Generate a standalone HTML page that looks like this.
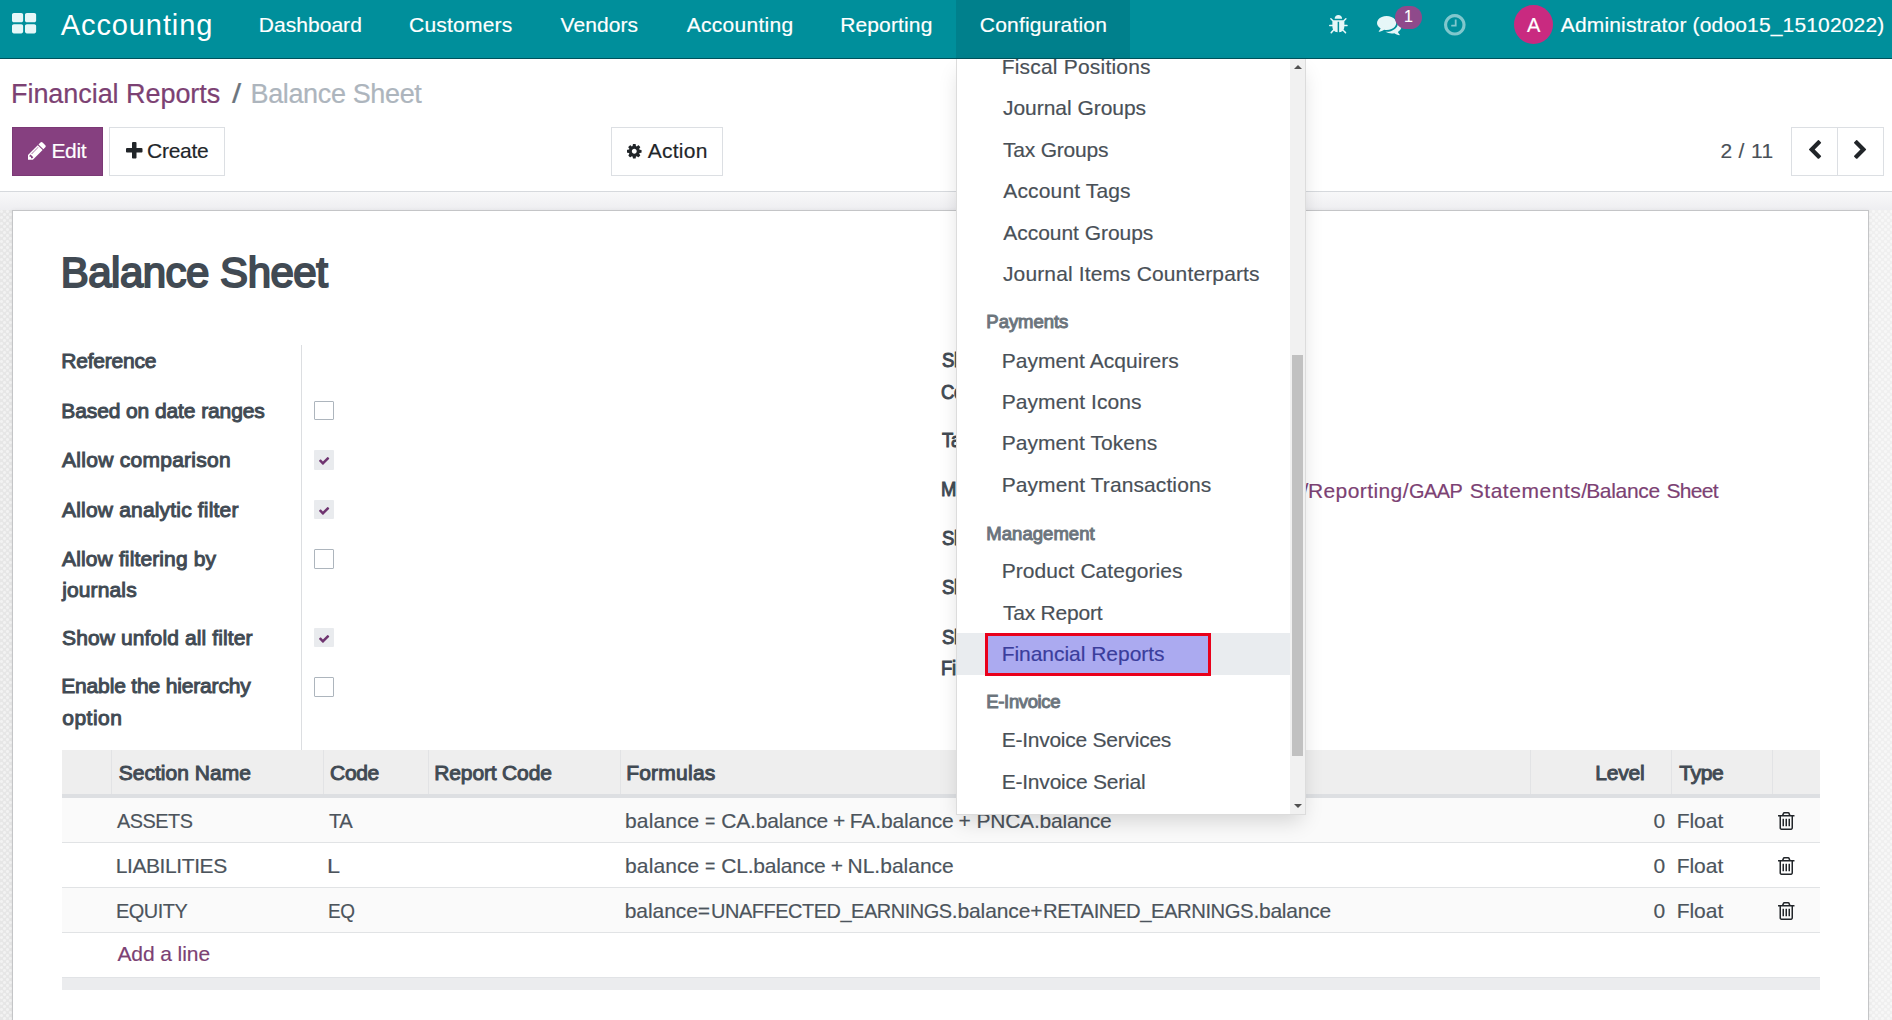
<!DOCTYPE html><html lang="en"><head><meta charset="utf-8"><title>Balance Sheet - Odoo</title><style>
*{box-sizing:border-box;margin:0;padding:0}
html,body{width:1892px;height:1020px;overflow:hidden;background:#fff}
body{position:relative;font-family:"Liberation Sans", sans-serif;font-size:21px;color:#495057;-webkit-font-smoothing:antialiased}
div,span,a,label,h1,svg,nav,header,main,section,ul,li{position:absolute;display:block}
a{text-decoration:none}
.t{white-space:nowrap;font-weight:400;font-style:normal}
.ic{overflow:visible}
.w{left:0;top:0;width:1892px;height:0}
#nav{left:0;top:0;width:1892px;height:59px;background:#008f9b;border-bottom:1px solid #00525c}
#cp{left:0;top:59px;width:1892px;height:133px;background:#fff;border-bottom:1px solid #d6d9dd}
#content{left:0;top:192px;width:1892px;height:828px;background-color:#e6e6e6;
 background-image:radial-gradient(circle at 1.5px 1.5px,#f2f2f2 1.0px,rgba(242,242,242,0) 2.2px),radial-gradient(circle at 1.5px 1.5px,#f2f2f2 1.0px,rgba(242,242,242,0) 2.2px);
 background-size:6px 6px;background-position:0 0,3px 3px}
#band{left:0;top:0;width:1892px;height:18px;background:linear-gradient(#f8f8f9,#eeeef1)}
#sheet{left:12px;top:18px;width:1857px;height:830px;background:#fff;border:1px solid #c4c5c7;box-shadow:0 0 4px rgba(0,0,0,.05)}
.btn{border:1px solid #dcdfe3;background:#fff}
.cb{border:1px solid #adb5bd;background:#fff;border-radius:1px}
.cbc{background:#e9ebee;border-radius:1px}
#dd{left:956px;top:59px;width:350px;height:756px;background:#fff;border:1px solid #dcdcdc;border-top:0;box-shadow:0 10px 20px -4px rgba(0,0,0,.155);overflow:hidden}
</style></head><body>
<header class="w"><div id="cp"></div>
<a class="t" style="left:11.00px;top:77.50px;font-size:27px;line-height:32px;letter-spacing:-0.054px;color:#7c4173;-webkit-text-stroke:0.22px #7c4173;">Financial Reports</a>
<span class="t" style="left:231.61px;top:77.50px;font-size:27px;line-height:32px;letter-spacing:0.000px;color:#6c757d;-webkit-text-stroke:0.22px #6c757d;transform:scaleX(1.2221);transform-origin:0 0;">/</span>
<span class="t" style="left:250.50px;top:77.50px;font-size:27px;line-height:32px;letter-spacing:-0.361px;color:#adb5bd;-webkit-text-stroke:0.22px #adb5bd;">Balance Sheet</span>
<div style="left:12px;top:127px;width:91px;height:49px;background:#864080;border:1px solid #7b3975;"></div>
<svg class="ic" style="left:28.00px;top:141.80px;width:17.75px;height:17.75px;" viewBox="0 -1387 1515 1515"><path fill="#fff" transform="scale(1,-1)" d="M363 0l91 91l-235 235l-91 -91v-107h128v-128h107zM886 928q0 22 -22 22q-10 0 -17 -7l-542 -542q-7 -7 -7 -17q0 -22 22 -22q10 0 17 7l542 542q7 7 7 17zM832 1120l416 -416l-832 -832h-416v416zM1515 1024q0 -53 -37 -90l-166 -166l-416 416l166 165q36 38 90 38
q53 0 91 -38l235 -234q37 -39 37 -91z"/></svg>
<span class="t" style="left:51.44px;top:138.00px;font-size:21px;line-height:25px;letter-spacing:-0.329px;color:#ffffff;-webkit-text-stroke:0.17px #ffffff;">Edit</span>
<div class="btn" style="left:109px;top:127px;width:116px;height:49px;"></div>
<svg class="ic" style="left:125.80px;top:141.60px;width:16.50px;height:16.50px;" viewBox="0 -1408 1408 1408"><path fill="#212529" transform="scale(1,-1)" d="M1408 800v-192q0 -40 -28 -68t-68 -28h-416v-416q0 -40 -28 -68t-68 -28h-192q-40 0 -68 28t-28 68v416h-416q-40 0 -68 28t-28 68v192q0 40 28 68t68 28h416v416q0 40 28 68t68 28h192q40 0 68 -28t28 -68v-416h416q40 0 68 -28t28 -68z"/></svg>
<span class="t" style="left:147.10px;top:138.00px;font-size:21px;line-height:25px;letter-spacing:-0.273px;color:#212529;-webkit-text-stroke:0.17px #212529;">Create</span>
<div class="btn" style="left:611px;top:127px;width:112px;height:49px;"></div>
<svg class="ic" style="left:627.20px;top:143.60px;width:14.57px;height:14.57px;" viewBox="0 -1408 1536 1536"><path fill="#212529" transform="scale(1,-1)" d="M1024 640q0 106 -75 181t-181 75t-181 -75t-75 -181t75 -181t181 -75t181 75t75 181zM1536 749v-222q0 -12 -8 -23t-20 -13l-185 -28q-19 -54 -39 -91q35 -50 107 -138q10 -12 10 -25t-9 -23q-27 -37 -99 -108t-94 -71q-12 0 -26 9l-138 108q-44 -23 -91 -38
q-16 -136 -29 -186q-7 -28 -36 -28h-222q-14 0 -24.5 8.5t-11.5 21.5l-28 184q-49 16 -90 37l-141 -107q-10 -9 -25 -9q-14 0 -25 11q-126 114 -165 168q-7 10 -7 23q0 12 8 23q15 21 51 66.5t54 70.5q-27 50 -41 99l-183 27q-13 2 -21 12.5t-8 23.5v222q0 12 8 23t19 13
l186 28q14 46 39 92q-40 57 -107 138q-10 12 -10 24q0 10 9 23q26 36 98.5 107.5t94.5 71.5q13 0 26 -10l138 -107q44 23 91 38q16 136 29 186q7 28 36 28h222q14 0 24.5 -8.5t11.5 -21.5l28 -184q49 -16 90 -37l142 107q9 9 24 9q13 0 25 -10q129 -119 165 -170q7 -8 7 -22
q0 -12 -8 -23q-15 -21 -51 -66.5t-54 -70.5q26 -50 41 -98l183 -28q13 -2 21 -12.5t8 -23.5z"/></svg>
<span class="t" style="left:647.69px;top:138.00px;font-size:21px;line-height:25px;letter-spacing:0.269px;color:#212529;-webkit-text-stroke:0.17px #212529;">Action</span>
<span class="t" style="left:1720.40px;top:138.00px;font-size:21px;line-height:25px;letter-spacing:0.337px;color:#495057;-webkit-text-stroke:0.17px #495057;">2 / 11</span>
<div class="btn" style="left:1791px;top:127px;width:47px;height:49px;"></div>
<div class="btn" style="left:1837px;top:127px;width:47px;height:49px;"></div>
<svg class="ic" style="left:1809.00px;top:140.20px;width:12.14px;height:18.89px;" viewBox="154.0 -1510.0 1036.0 1612.0"><path fill="#212529" transform="scale(1,-1)" d="M1171 1235l-531 -531l531 -531q19 -19 19 -45t-19 -45l-166 -166q-19 -19 -45 -19t-45 19l-742 742q-19 19 -19 45t19 45l742 742q19 19 45 19t45 -19l166 -166q19 -19 19 -45t-19 -45z"/></svg>
<svg class="ic" style="left:1853.70px;top:140.20px;width:12.14px;height:18.89px;" viewBox="90.0 -1510.0 1036.0 1612.0"><path fill="#212529" transform="scale(1,-1)" d="M1107 659l-742 -742q-19 -19 -45 -19t-45 19l-166 166q-19 19 -19 45t19 45l531 531l-531 531q-19 19 -19 45t19 45l166 166q19 19 45 19t45 -19l742 -742q19 -19 19 -45t-19 -45z"/></svg>
</header>
<main class="w">
<div id="content"><div style="left:1869px;top:18px;width:23px;height:810px;background:rgba(255,255,255,.38)"></div><div id="band"></div><div id="sheet"></div></div>
<h1 class="t" style="left:60.68px;top:247.50px;font-size:42px;line-height:50px;letter-spacing:-0.500px;color:#414a53;-webkit-text-stroke:1.93px #414a53;">Balance Sheet</h1>
<label class="t" style="left:61.24px;top:347.80px;font-size:21px;line-height:25px;letter-spacing:-0.221px;color:#414a53;-webkit-text-stroke:0.97px #414a53;">Reference</label>
<label class="t" style="left:61.24px;top:397.60px;font-size:21px;line-height:25px;letter-spacing:-0.098px;color:#414a53;-webkit-text-stroke:0.97px #414a53;">Based on date ranges</label>
<label class="t" style="left:62.09px;top:446.70px;font-size:21px;line-height:25px;letter-spacing:0.270px;color:#414a53;-webkit-text-stroke:0.97px #414a53;">Allow comparison</label>
<label class="t" style="left:62.09px;top:496.60px;font-size:21px;line-height:25px;letter-spacing:0.180px;color:#414a53;-webkit-text-stroke:0.97px #414a53;">Allow analytic filter</label>
<label class="t" style="left:62.09px;top:546.00px;font-size:21px;line-height:25px;letter-spacing:0.130px;color:#414a53;-webkit-text-stroke:0.97px #414a53;">Allow filtering by</label>
<label class="t" style="left:62.14px;top:577.00px;font-size:21px;line-height:25px;letter-spacing:0.141px;color:#414a53;-webkit-text-stroke:0.97px #414a53;">journals</label>
<label class="t" style="left:62.03px;top:624.60px;font-size:21px;line-height:25px;letter-spacing:0.126px;color:#414a53;-webkit-text-stroke:0.97px #414a53;">Show unfold all filter</label>
<label class="t" style="left:61.24px;top:673.40px;font-size:21px;line-height:25px;letter-spacing:-0.160px;color:#414a53;-webkit-text-stroke:0.97px #414a53;">Enable the hierarchy</label>
<label class="t" style="left:62.23px;top:705.40px;font-size:21px;line-height:25px;letter-spacing:0.490px;color:#414a53;-webkit-text-stroke:0.97px #414a53;">option</label>
<div style="left:301px;top:345px;width:1px;height:405px;background:#dcdee1;"></div>
<div style="left:1180px;top:345px;width:1px;height:405px;background:#dcdee1;"></div>
<div class="cb" style="left:314px;top:401px;width:20px;height:19px;"></div>
<div class="cbc" style="left:314px;top:450px;width:20px;height:20px;"></div>
<svg class="ic" style="left:318.80px;top:456.90px;width:10.21px;height:7.82px;" viewBox="121.0 -1202.0 1550.0 1188.0"><path fill="#6f3470" transform="scale(1,-1)" d="M1671 970q0 -40 -28 -68l-724 -724l-136 -136q-28 -28 -68 -28t-68 28l-136 136l-362 362q-28 28 -28 68t28 68l136 136q28 28 68 28t68 -28l294 -295l656 657q28 28 68 28t68 -28l136 -136q28 -28 28 -68z"/></svg>
<div class="cbc" style="left:314px;top:500px;width:20px;height:19px;"></div>
<svg class="ic" style="left:318.80px;top:506.90px;width:10.21px;height:7.82px;" viewBox="121.0 -1202.0 1550.0 1188.0"><path fill="#6f3470" transform="scale(1,-1)" d="M1671 970q0 -40 -28 -68l-724 -724l-136 -136q-28 -28 -68 -28t-68 28l-136 136l-362 362q-28 28 -28 68t28 68l136 136q28 28 68 28t68 -28l294 -295l656 657q28 28 68 28t68 -28l136 -136q28 -28 28 -68z"/></svg>
<div class="cb" style="left:314px;top:549px;width:20px;height:20px;"></div>
<div class="cbc" style="left:314px;top:628px;width:20px;height:19px;"></div>
<svg class="ic" style="left:318.80px;top:634.90px;width:10.21px;height:7.82px;" viewBox="121.0 -1202.0 1550.0 1188.0"><path fill="#6f3470" transform="scale(1,-1)" d="M1671 970q0 -40 -28 -68l-724 -724l-136 -136q-28 -28 -68 -28t-68 28l-136 136l-362 362q-28 28 -28 68t28 68l136 136q28 28 68 28t68 -28l294 -295l656 657q28 28 68 28t68 -28l136 -136q28 -28 28 -68z"/></svg>
<div class="cb" style="left:314px;top:677px;width:20px;height:20px;"></div>
<label class="t" style="left:941.51px;top:347.40px;font-size:21px;line-height:25px;letter-spacing:-0.300px;color:#414a53;-webkit-text-stroke:0.97px #414a53;transform:scaleX(0.8800);transform-origin:0 0;">Show Credit and Debit</label>
<label class="t" style="left:941.22px;top:379.00px;font-size:21px;line-height:25px;letter-spacing:-0.300px;color:#414a53;-webkit-text-stroke:0.97px #414a53;transform:scaleX(0.8800);transform-origin:0 0;">Columns</label>
<label class="t" style="left:941.80px;top:426.60px;font-size:21px;line-height:25px;letter-spacing:-0.300px;color:#414a53;-webkit-text-stroke:0.97px #414a53;transform:scaleX(0.8800);transform-origin:0 0;">Tax Report</label>
<label class="t" style="left:940.64px;top:475.60px;font-size:21px;line-height:25px;letter-spacing:-0.300px;color:#414a53;-webkit-text-stroke:0.97px #414a53;transform:scaleX(0.8800);transform-origin:0 0;">Menu Item</label>
<label class="t" style="left:941.51px;top:524.70px;font-size:21px;line-height:25px;letter-spacing:-0.300px;color:#414a53;-webkit-text-stroke:0.97px #414a53;transform:scaleX(0.8800);transform-origin:0 0;">Show Journals Filter</label>
<label class="t" style="left:941.51px;top:574.00px;font-size:21px;line-height:25px;letter-spacing:-0.300px;color:#414a53;-webkit-text-stroke:0.97px #414a53;transform:scaleX(0.8800);transform-origin:0 0;">Show Partner Filter</label>
<label class="t" style="left:941.51px;top:624.20px;font-size:21px;line-height:25px;letter-spacing:-0.300px;color:#414a53;-webkit-text-stroke:0.97px #414a53;transform:scaleX(0.8800);transform-origin:0 0;">Show Account Groups</label>
<label class="t" style="left:940.64px;top:655.40px;font-size:21px;line-height:25px;letter-spacing:-0.300px;color:#414a53;-webkit-text-stroke:0.97px #414a53;transform:scaleX(0.8800);transform-origin:0 0;">Filter</label>
<a class="t" style="left:0;top:0;width:1892px;height:0">
<span class="t" style="right:583.6px;top:478.20px;font-size:21px;line-height:25px;letter-spacing:0.02px;color:#7c4173;-webkit-text-stroke:0.17px #7c4173">Accounting/</span>
<span class="t menu" style="left:1307.94px;top:478.20px;font-size:21px;line-height:25px;letter-spacing:0.412px;color:#7c4173;-webkit-text-stroke:0.17px #7c4173;">Reporting/</span>
<span class="t menu" style="left:1409.05px;top:478.20px;font-size:21px;line-height:25px;letter-spacing:-0.500px;color:#7c4173;-webkit-text-stroke:0.17px #7c4173;transform:scaleX(0.9480);transform-origin:0 0;">GAAP</span>
<span class="t menu" style="left:1469.73px;top:478.20px;font-size:21px;line-height:25px;letter-spacing:0.536px;color:#7c4173;-webkit-text-stroke:0.17px #7c4173;">Statements/</span>
<span class="t menu" style="left:1586.14px;top:478.20px;font-size:21px;line-height:25px;letter-spacing:-0.311px;color:#7c4173;-webkit-text-stroke:0.17px #7c4173;">Balance</span>
<span class="t menu" style="left:1666.43px;top:478.20px;font-size:21px;line-height:25px;letter-spacing:-0.691px;color:#7c4173;-webkit-text-stroke:0.17px #7c4173;">Sheet</span>
</a>
<div style="left:62px;top:750px;width:1758px;height:44px;background:#eeeeee;"></div>
<div style="left:62px;top:794px;width:1758px;height:4px;background:#dddfe2;"></div>
<div style="left:111px;top:750px;width:1px;height:44px;background:#e2e3e5;"></div>
<div style="left:323px;top:750px;width:1px;height:44px;background:#e2e3e5;"></div>
<div style="left:428px;top:750px;width:1px;height:44px;background:#e2e3e5;"></div>
<div style="left:620px;top:750px;width:1px;height:44px;background:#e2e3e5;"></div>
<div style="left:1530px;top:750px;width:1px;height:44px;background:#e2e3e5;"></div>
<div style="left:1671px;top:750px;width:1px;height:44px;background:#e2e3e5;"></div>
<div style="left:1772px;top:750px;width:1px;height:44px;background:#e2e3e5;"></div>
<span class="t" style="left:118.63px;top:759.60px;font-size:21px;line-height:25px;letter-spacing:0.040px;color:#414a53;-webkit-text-stroke:0.97px #414a53;">Section Name</span>
<span class="t" style="left:330.10px;top:759.60px;font-size:21px;line-height:25px;letter-spacing:-0.379px;color:#414a53;-webkit-text-stroke:0.97px #414a53;">Code</span>
<span class="t" style="left:434.34px;top:759.60px;font-size:21px;line-height:25px;letter-spacing:-0.155px;color:#414a53;-webkit-text-stroke:0.97px #414a53;">Report Code</span>
<span class="t" style="left:626.14px;top:759.60px;font-size:21px;line-height:25px;letter-spacing:0.244px;color:#414a53;-webkit-text-stroke:0.97px #414a53;">Formulas</span>
<span class="t" style="left:1595.14px;top:759.60px;font-size:21px;line-height:25px;letter-spacing:-0.162px;color:#414a53;-webkit-text-stroke:0.97px #414a53;">Level</span>
<span class="t" style="left:1679.36px;top:759.60px;font-size:21px;line-height:25px;letter-spacing:-0.373px;color:#414a53;-webkit-text-stroke:0.97px #414a53;">Type</span>
<div style="left:62px;top:798px;width:1758px;height:44px;background:#fafafa;"></div>
<div style="left:62px;top:842px;width:1758px;height:1px;background:#e1e3e5;"></div>
<div style="left:62px;top:887px;width:1758px;height:1px;background:#e1e3e5;"></div>
<div style="left:62px;top:888px;width:1758px;height:44px;background:#fafafa;"></div>
<div style="left:62px;top:932px;width:1758px;height:1px;background:#e1e3e5;"></div>
<div style="left:62px;top:977px;width:1758px;height:1px;background:#e1e3e6;"></div>
<div style="left:62px;top:978px;width:1758px;height:12px;background:#ebecee;"></div>
<span class="t" style="left:117.38px;top:807.50px;font-size:21px;line-height:25px;letter-spacing:-0.500px;color:#4c545c;-webkit-text-stroke:0.17px #4c545c;transform:scaleX(0.9440);transform-origin:0 0;">ASSETS</span>
<span class="t" style="left:328.97px;top:807.50px;font-size:21px;line-height:25px;letter-spacing:-0.500px;color:#4c545c;-webkit-text-stroke:0.17px #4c545c;transform:scaleX(0.9625);transform-origin:0 0;">TA</span>
<span class="t" style="left:0;top:0;width:1892px;height:0">
<span class="t" style="left:625.07px;top:807.50px;font-size:21px;line-height:25px;letter-spacing:0.105px;color:#4c545c;-webkit-text-stroke:0.17px #4c545c;">balance</span>
<span class="t" style="left:704.96px;top:807.50px;font-size:21px;line-height:25px;letter-spacing:0.000px;color:#4c545c;-webkit-text-stroke:0.17px #4c545c;transform:scaleX(0.8410);transform-origin:0 0;">=</span>
<span class="t" style="left:721.20px;top:807.50px;font-size:21px;line-height:25px;letter-spacing:-0.167px;color:#4c545c;-webkit-text-stroke:0.17px #4c545c;">CA.balance</span>
<span class="t" style="left:832.90px;top:807.50px;font-size:21px;line-height:25px;letter-spacing:0.000px;color:#4c545c;-webkit-text-stroke:0.17px #4c545c;">+</span>
<span class="t" style="left:849.84px;top:807.50px;font-size:21px;line-height:25px;letter-spacing:-0.128px;color:#4c545c;-webkit-text-stroke:0.17px #4c545c;">FA.balance</span>
<span class="t" style="left:958.60px;top:807.50px;font-size:21px;line-height:25px;letter-spacing:0.000px;color:#4c545c;-webkit-text-stroke:0.17px #4c545c;">+</span>
<span class="t" style="left:976.44px;top:807.50px;font-size:21px;line-height:25px;letter-spacing:-0.220px;color:#4c545c;-webkit-text-stroke:0.17px #4c545c;">PNCA.balance</span>
</span>
<span class="t" style="left:1653.43px;top:807.50px;font-size:21px;line-height:25px;letter-spacing:0.000px;color:#4c545c;-webkit-text-stroke:0.17px #4c545c;">0</span>
<span class="t" style="left:1676.64px;top:807.50px;font-size:21px;line-height:25px;letter-spacing:-0.022px;color:#4c545c;-webkit-text-stroke:0.17px #4c545c;">Float</span>
<svg class="ic" style="left:1777.50px;top:811.60px;width:16.50px;height:18.00px;" viewBox="0 -1408 1408 1536"><path fill="#212529" transform="scale(1,-1)" d="M512 800v-576q0 -14 -9 -23t-23 -9h-64q-14 0 -23 9t-9 23v576q0 14 9 23t23 9h64q14 0 23 -9t9 -23zM768 800v-576q0 -14 -9 -23t-23 -9h-64q-14 0 -23 9t-9 23v576q0 14 9 23t23 9h64q14 0 23 -9t9 -23zM1024 800v-576q0 -14 -9 -23t-23 -9h-64q-14 0 -23 9t-9 23v576
q0 14 9 23t23 9h64q14 0 23 -9t9 -23zM1152 76v948h-896v-948q0 -22 7 -40.5t14.5 -27t10.5 -8.5h832q3 0 10.5 8.5t14.5 27t7 40.5zM480 1152h448l-48 117q-7 9 -17 11h-317q-10 -2 -17 -11zM1408 1120v-64q0 -14 -9 -23t-23 -9h-96v-948q0 -83 -47 -143.5t-113 -60.5h-832
q-66 0 -113 58.5t-47 141.5v952h-96q-14 0 -23 9t-9 23v64q0 14 9 23t23 9h309l70 167q15 37 54 63t79 26h320q40 0 79 -26t54 -63l70 -167h309q14 0 23 -9t9 -23z"/></svg>
<span class="t" style="left:115.74px;top:852.50px;font-size:21px;line-height:25px;letter-spacing:-0.410px;color:#4c545c;-webkit-text-stroke:0.17px #4c545c;">LIABILITIES</span>
<span class="t" style="left:327.45px;top:852.50px;font-size:21px;line-height:25px;letter-spacing:0.000px;color:#4c545c;-webkit-text-stroke:0.17px #4c545c;transform:scaleX(1.1171);transform-origin:0 0;">L</span>
<span class="t" style="left:0;top:0;width:1892px;height:0">
<span class="t" style="left:625.07px;top:852.50px;font-size:21px;line-height:25px;letter-spacing:0.105px;color:#4c545c;-webkit-text-stroke:0.17px #4c545c;">balance</span>
<span class="t" style="left:704.96px;top:852.50px;font-size:21px;line-height:25px;letter-spacing:0.000px;color:#4c545c;-webkit-text-stroke:0.17px #4c545c;transform:scaleX(0.8410);transform-origin:0 0;">=</span>
<span class="t" style="left:721.20px;top:852.50px;font-size:21px;line-height:25px;letter-spacing:-0.197px;color:#4c545c;-webkit-text-stroke:0.17px #4c545c;">CL.balance</span>
<span class="t" style="left:830.80px;top:852.50px;font-size:21px;line-height:25px;letter-spacing:0.000px;color:#4c545c;-webkit-text-stroke:0.17px #4c545c;">+</span>
<span class="t" style="left:847.54px;top:852.50px;font-size:21px;line-height:25px;letter-spacing:-0.002px;color:#4c545c;-webkit-text-stroke:0.17px #4c545c;">NL.balance</span>
</span>
<span class="t" style="left:1653.43px;top:852.50px;font-size:21px;line-height:25px;letter-spacing:0.000px;color:#4c545c;-webkit-text-stroke:0.17px #4c545c;">0</span>
<span class="t" style="left:1676.64px;top:852.50px;font-size:21px;line-height:25px;letter-spacing:-0.022px;color:#4c545c;-webkit-text-stroke:0.17px #4c545c;">Float</span>
<svg class="ic" style="left:1777.50px;top:856.60px;width:16.50px;height:18.00px;" viewBox="0 -1408 1408 1536"><path fill="#212529" transform="scale(1,-1)" d="M512 800v-576q0 -14 -9 -23t-23 -9h-64q-14 0 -23 9t-9 23v576q0 14 9 23t23 9h64q14 0 23 -9t9 -23zM768 800v-576q0 -14 -9 -23t-23 -9h-64q-14 0 -23 9t-9 23v576q0 14 9 23t23 9h64q14 0 23 -9t9 -23zM1024 800v-576q0 -14 -9 -23t-23 -9h-64q-14 0 -23 9t-9 23v576
q0 14 9 23t23 9h64q14 0 23 -9t9 -23zM1152 76v948h-896v-948q0 -22 7 -40.5t14.5 -27t10.5 -8.5h832q3 0 10.5 8.5t14.5 27t7 40.5zM480 1152h448l-48 117q-7 9 -17 11h-317q-10 -2 -17 -11zM1408 1120v-64q0 -14 -9 -23t-23 -9h-96v-948q0 -83 -47 -143.5t-113 -60.5h-832
q-66 0 -113 58.5t-47 141.5v952h-96q-14 0 -23 9t-9 23v64q0 14 9 23t23 9h309l70 167q15 37 54 63t79 26h320q40 0 79 -26t54 -63l70 -167h309q14 0 23 -9t9 -23z"/></svg>
<span class="t" style="left:115.83px;top:898.00px;font-size:21px;line-height:25px;letter-spacing:-0.500px;color:#4c545c;-webkit-text-stroke:0.17px #4c545c;transform:scaleX(0.9488);transform-origin:0 0;">EQUITY</span>
<span class="t" style="left:327.80px;top:898.00px;font-size:21px;line-height:25px;letter-spacing:-0.500px;color:#4c545c;-webkit-text-stroke:0.17px #4c545c;transform:scaleX(0.9026);transform-origin:0 0;">EQ</span>
<span class="t" style="left:0;top:0;width:1892px;height:0">
<span class="t" style="left:624.67px;top:898.00px;font-size:21px;line-height:25px;letter-spacing:-0.058px;color:#4c545c;-webkit-text-stroke:0.17px #4c545c;">balance=</span>
<span class="t" style="left:710.74px;top:898.00px;font-size:21px;line-height:25px;letter-spacing:-0.500px;color:#4c545c;-webkit-text-stroke:0.17px #4c545c;transform:scaleX(0.9506);transform-origin:0 0;">UNAFFECTED_EARNINGS</span>
<span class="t" style="left:951.74px;top:898.00px;font-size:21px;line-height:25px;letter-spacing:-0.101px;color:#4c545c;-webkit-text-stroke:0.17px #4c545c;">.balance+</span>
<span class="t" style="left:1042.70px;top:898.00px;font-size:21px;line-height:25px;letter-spacing:-0.500px;color:#4c545c;-webkit-text-stroke:0.17px #4c545c;transform:scaleX(0.9660);transform-origin:0 0;">RETAINED_EARNINGS</span>
<span class="t" style="left:1253.44px;top:898.00px;font-size:21px;line-height:25px;letter-spacing:-0.253px;color:#4c545c;-webkit-text-stroke:0.17px #4c545c;">.balance</span>
</span>
<span class="t" style="left:1653.43px;top:898.00px;font-size:21px;line-height:25px;letter-spacing:0.000px;color:#4c545c;-webkit-text-stroke:0.17px #4c545c;">0</span>
<span class="t" style="left:1676.64px;top:898.00px;font-size:21px;line-height:25px;letter-spacing:-0.022px;color:#4c545c;-webkit-text-stroke:0.17px #4c545c;">Float</span>
<svg class="ic" style="left:1777.50px;top:902.00px;width:16.50px;height:18.00px;" viewBox="0 -1408 1408 1536"><path fill="#212529" transform="scale(1,-1)" d="M512 800v-576q0 -14 -9 -23t-23 -9h-64q-14 0 -23 9t-9 23v576q0 14 9 23t23 9h64q14 0 23 -9t9 -23zM768 800v-576q0 -14 -9 -23t-23 -9h-64q-14 0 -23 9t-9 23v576q0 14 9 23t23 9h64q14 0 23 -9t9 -23zM1024 800v-576q0 -14 -9 -23t-23 -9h-64q-14 0 -23 9t-9 23v576
q0 14 9 23t23 9h64q14 0 23 -9t9 -23zM1152 76v948h-896v-948q0 -22 7 -40.5t14.5 -27t10.5 -8.5h832q3 0 10.5 8.5t14.5 27t7 40.5zM480 1152h448l-48 117q-7 9 -17 11h-317q-10 -2 -17 -11zM1408 1120v-64q0 -14 -9 -23t-23 -9h-96v-948q0 -83 -47 -143.5t-113 -60.5h-832
q-66 0 -113 58.5t-47 141.5v952h-96q-14 0 -23 9t-9 23v64q0 14 9 23t23 9h309l70 167q15 37 54 63t79 26h320q40 0 79 -26t54 -63l70 -167h309q14 0 23 -9t9 -23z"/></svg>
<a class="t" style="left:117.38px;top:941.40px;font-size:21px;line-height:25px;letter-spacing:-0.080px;color:#7c4173;-webkit-text-stroke:0.17px #7c4173;">Add a line</a>
</main>
<nav class="w">
<div id="nav"></div>
<div style="left:956px;top:0px;width:174px;height:58px;background:#00808c;"></div>
<svg class="ic" style="left:12.00px;top:13.00px;width:24.14px;height:20.43px;" viewBox="0 -1408 1664 1408"><path fill="#e6f7f8" transform="scale(1,-1)" d="M768 512v-384q0 -52 -38 -90t-90 -38h-512q-52 0 -90 38t-38 90v384q0 52 38 90t90 38h512q52 0 90 -38t38 -90zM768 1280v-384q0 -52 -38 -90t-90 -38h-512q-52 0 -90 38t-38 90v384q0 52 38 90t90 38h512q52 0 90 -38t38 -90zM1664 512v-384q0 -52 -38 -90t-90 -38
h-512q-52 0 -90 38t-38 90v384q0 52 38 90t90 38h512q52 0 90 -38t38 -90zM1664 1280v-384q0 -52 -38 -90t-90 -38h-512q-52 0 -90 38t-38 90v384q0 52 38 90t90 38h512q52 0 90 -38t38 -90z"/></svg>
<a class="t brand" style="left:60.75px;top:7.50px;font-size:29px;line-height:35px;letter-spacing:0.905px;color:#ffffff;">Accounting</a>
<a class="t" style="left:258.69px;top:12.00px;font-size:21px;line-height:25px;letter-spacing:0.052px;color:#ffffff;-webkit-text-stroke:0.17px #ffffff;">Dashboard</a>
<a class="t" style="left:409.10px;top:12.00px;font-size:21px;line-height:25px;letter-spacing:0.212px;color:#ffffff;-webkit-text-stroke:0.17px #ffffff;">Customers</a>
<a class="t" style="left:560.59px;top:12.00px;font-size:21px;line-height:25px;letter-spacing:0.071px;color:#ffffff;-webkit-text-stroke:0.17px #ffffff;">Vendors</a>
<a class="t" style="left:686.84px;top:12.00px;font-size:21px;line-height:25px;letter-spacing:0.262px;color:#ffffff;-webkit-text-stroke:0.17px #ffffff;">Accounting</a>
<a class="t" style="left:840.19px;top:12.00px;font-size:21px;line-height:25px;letter-spacing:0.137px;color:#ffffff;-webkit-text-stroke:0.17px #ffffff;">Reporting</a>
<a class="t" style="left:979.85px;top:12.00px;font-size:21px;line-height:25px;letter-spacing:0.173px;color:#ffffff;-webkit-text-stroke:0.17px #ffffff;">Configuration</a>
<svg class="ic" style="left:1328.50px;top:15.00px;width:18.75px;height:18.38px;" viewBox="32.0 -1472.0 1600.0 1568.0"><path fill="#e6f7f8" transform="scale(1,-1)" d="M1632 576q0 -26 -19 -45t-45 -19h-224q0 -171 -67 -290l208 -209q19 -19 19 -45t-19 -45q-18 -19 -45 -19t-45 19l-198 197q-5 -5 -15 -13t-42 -28.5t-65 -36.5t-82 -29t-97 -13v896h-128v-896q-51 0 -101.5 13.5t-87 33t-66 39t-43.5 32.5l-15 14l-183 -207
q-20 -21 -48 -21q-24 0 -43 16q-19 18 -20.5 44.5t15.5 46.5l202 227q-58 114 -58 274h-224q-26 0 -45 19t-19 45t19 45t45 19h224v294l-173 173q-19 19 -19 45t19 45t45 19t45 -19l173 -173h844l173 173q19 19 45 19t45 -19t19 -45t-19 -45l-173 -173v-294h224q26 0 45 -19
t19 -45zM1152 1152h-640q0 133 93.5 226.5t226.5 93.5t226.5 -93.5t93.5 -226.5z"/></svg>
<svg class="ic" style="left:1377.00px;top:15.90px;width:24.50px;height:19.25px;" viewBox="0 -1280.0 1792 1408.111111111111"><path fill="#e6f7f8" transform="scale(1,-1)" d="M1408 768q0 -139 -94 -257t-256.5 -186.5t-353.5 -68.5q-86 0 -176 16q-124 -88 -278 -128q-36 -9 -86 -16h-3q-11 0 -20.5 8t-11.5 21q-1 3 -1 6.5t0.5 6.5t2 6l2.5 5t3.5 5.5t4 5t4.5 5t4 4.5q5 6 23 25t26 29.5t22.5 29t25 38.5t20.5 44q-124 72 -195 177t-71 224
q0 139 94 257t256.5 186.5t353.5 68.5t353.5 -68.5t256.5 -186.5t94 -257zM1792 512q0 -120 -71 -224.5t-195 -176.5q10 -24 20.5 -44t25 -38.5t22.5 -29t26 -29.5t23 -25q1 -1 4 -4.5t4.5 -5t4 -5t3.5 -5.5l2.5 -5t2 -6t0.5 -6.5t-1 -6.5q-3 -14 -13 -22t-22 -7
q-50 7 -86 16q-154 40 -278 128q-90 -16 -176 -16q-271 0 -472 132q58 -4 88 -4q161 0 309 45t264 129q125 92 192 212t67 254q0 77 -23 152q129 -71 204 -178t75 -230z"/></svg>
<div style="left:1395px;top:5.5px;width:27px;height:23.0px;background:#8f4a8b;border-radius:12px;"></div>
<span class="t" style="left:1403.97px;top:7.00px;font-size:16px;line-height:19px;letter-spacing:0.000px;color:#ffffff;-webkit-text-stroke:0.13px #ffffff;">1</span>
<svg class="ic" style="left:1444.30px;top:13.50px;width:21.60px;height:21.60px;opacity:0.5;" viewBox="0.0 -1408.0 1536.0 1536.0"><path fill="#ffffff" transform="scale(1,-1)" d="M896 992v-448q0 -14 -9 -23t-23 -9h-320q-14 0 -23 9t-9 23v64q0 14 9 23t23 9h224v352q0 14 9 23t23 9h64q14 0 23 -9t9 -23zM1312 640q0 148 -73 273t-198 198t-273 73t-273 -73t-198 -198t-73 -273t73 -273t198 -198t273 -73t273 73t198 198t73 273zM1536 640
q0 -209 -103 -385.5t-279.5 -279.5t-385.5 -103t-385.5 103t-279.5 279.5t-103 385.5t103 385.5t279.5 279.5t385.5 103t385.5 -103t279.5 -279.5t103 -385.5z"/></svg>
<div style="left:1514px;top:5px;width:39px;height:39px;background:#c92a80;border-radius:50%;"></div>
<span class="t" style="left:1526.98px;top:12.60px;font-size:20px;line-height:24px;letter-spacing:0.000px;color:#ffffff;-webkit-text-stroke:0.16px #ffffff;">A</span>
<span class="t" style="left:1560.79px;top:11.60px;font-size:21px;line-height:25px;letter-spacing:0.160px;color:#ffffff;-webkit-text-stroke:0.17px #ffffff;">Administrator (odoo15_15102022)</span>
</nav>
<section class="w">
<div id="dd"></div>
<div style="left:957px;top:633px;width:333px;height:42px;background:#e9ecef;"></div>
<div style="left:985px;top:633px;width:226px;height:43px;background:#abaaf0;border:3px solid #e9001b;"></div>
<div style="left:1290px;top:59px;width:15px;height:755px;background:#f1f1f1;"></div>
<div style="left:1292px;top:355px;width:11px;height:401px;background:#c1c1c1;"></div>
<svg class="ic" style="left:1293.5px;top:65px;width:8px;height:4px" viewBox="0 0 8 4"><path d="M0 4L4 0L8 4Z" fill="#505050"/></svg>
<svg class="ic" style="left:1293.5px;top:804px;width:8px;height:4px" viewBox="0 0 8 4"><path d="M0 0L4 4L8 0Z" fill="#505050"/></svg>
<a class="t dd" style="left:1001.64px;top:53.90px;font-size:21px;line-height:25px;letter-spacing:0.203px;color:#495057;-webkit-text-stroke:0.17px #495057;">Fiscal Positions</a>
<a class="t dd" style="left:1002.96px;top:95.40px;font-size:21px;line-height:25px;letter-spacing:-0.035px;color:#495057;-webkit-text-stroke:0.17px #495057;">Journal Groups</a>
<a class="t dd" style="left:1002.96px;top:136.60px;font-size:21px;line-height:25px;letter-spacing:-0.196px;color:#495057;-webkit-text-stroke:0.17px #495057;">Tax Groups</a>
<a class="t dd" style="left:1003.29px;top:177.90px;font-size:21px;line-height:25px;letter-spacing:0.147px;color:#495057;-webkit-text-stroke:0.17px #495057;">Account Tags</a>
<a class="t dd" style="left:1003.29px;top:219.60px;font-size:21px;line-height:25px;letter-spacing:-0.038px;color:#495057;-webkit-text-stroke:0.17px #495057;">Account Groups</a>
<a class="t dd" style="left:1002.96px;top:261.20px;font-size:21px;line-height:25px;letter-spacing:0.133px;color:#495057;-webkit-text-stroke:0.17px #495057;">Journal Items Counterparts</a>
<a class="t dd" style="left:1001.64px;top:347.70px;font-size:21px;line-height:25px;letter-spacing:0.058px;color:#495057;-webkit-text-stroke:0.17px #495057;">Payment Acquirers</a>
<a class="t dd" style="left:1001.64px;top:388.80px;font-size:21px;line-height:25px;letter-spacing:0.086px;color:#495057;-webkit-text-stroke:0.17px #495057;">Payment Icons</a>
<a class="t dd" style="left:1001.64px;top:430.00px;font-size:21px;line-height:25px;letter-spacing:0.053px;color:#495057;-webkit-text-stroke:0.17px #495057;">Payment Tokens</a>
<a class="t dd" style="left:1001.64px;top:471.50px;font-size:21px;line-height:25px;letter-spacing:0.094px;color:#495057;-webkit-text-stroke:0.17px #495057;">Payment Transactions</a>
<a class="t dd" style="left:1001.64px;top:557.60px;font-size:21px;line-height:25px;letter-spacing:0.069px;color:#495057;-webkit-text-stroke:0.17px #495057;">Product Categories</a>
<a class="t dd" style="left:1001.64px;top:726.60px;font-size:21px;line-height:25px;letter-spacing:-0.245px;color:#495057;-webkit-text-stroke:0.17px #495057;">E-Invoice Services</a>
<a class="t dd" style="left:1001.64px;top:768.50px;font-size:21px;line-height:25px;letter-spacing:-0.200px;color:#495057;-webkit-text-stroke:0.17px #495057;">E-Invoice Serial</a>
<div class="t ddh" style="left:986.35px;top:311.20px;font-size:18.5px;line-height:22px;letter-spacing:-0.048px;color:#6c757d;-webkit-text-stroke:1.0px #6c757d;">Payments</div>
<div class="t ddh" style="left:986.35px;top:522.90px;font-size:18.5px;line-height:22px;letter-spacing:0.033px;color:#6c757d;-webkit-text-stroke:1.0px #6c757d;">Management</div>
<div class="t ddh" style="left:986.35px;top:690.50px;font-size:18.5px;line-height:22px;letter-spacing:-0.365px;color:#6c757d;-webkit-text-stroke:1.0px #6c757d;">E-Invoice</div>
<a class="t dd" style="left:1002.96px;top:599.50px;font-size:21px;line-height:25px;letter-spacing:-0.218px;color:#495057;-webkit-text-stroke:0.17px #495057;">Tax Report</a>
<a class="t dd" style="left:1001.64px;top:640.70px;font-size:21px;line-height:25px;letter-spacing:-0.030px;color:#3a3d9c;-webkit-text-stroke:0.17px #3a3d9c;">Financial Reports</a>
</section>
</body></html>
